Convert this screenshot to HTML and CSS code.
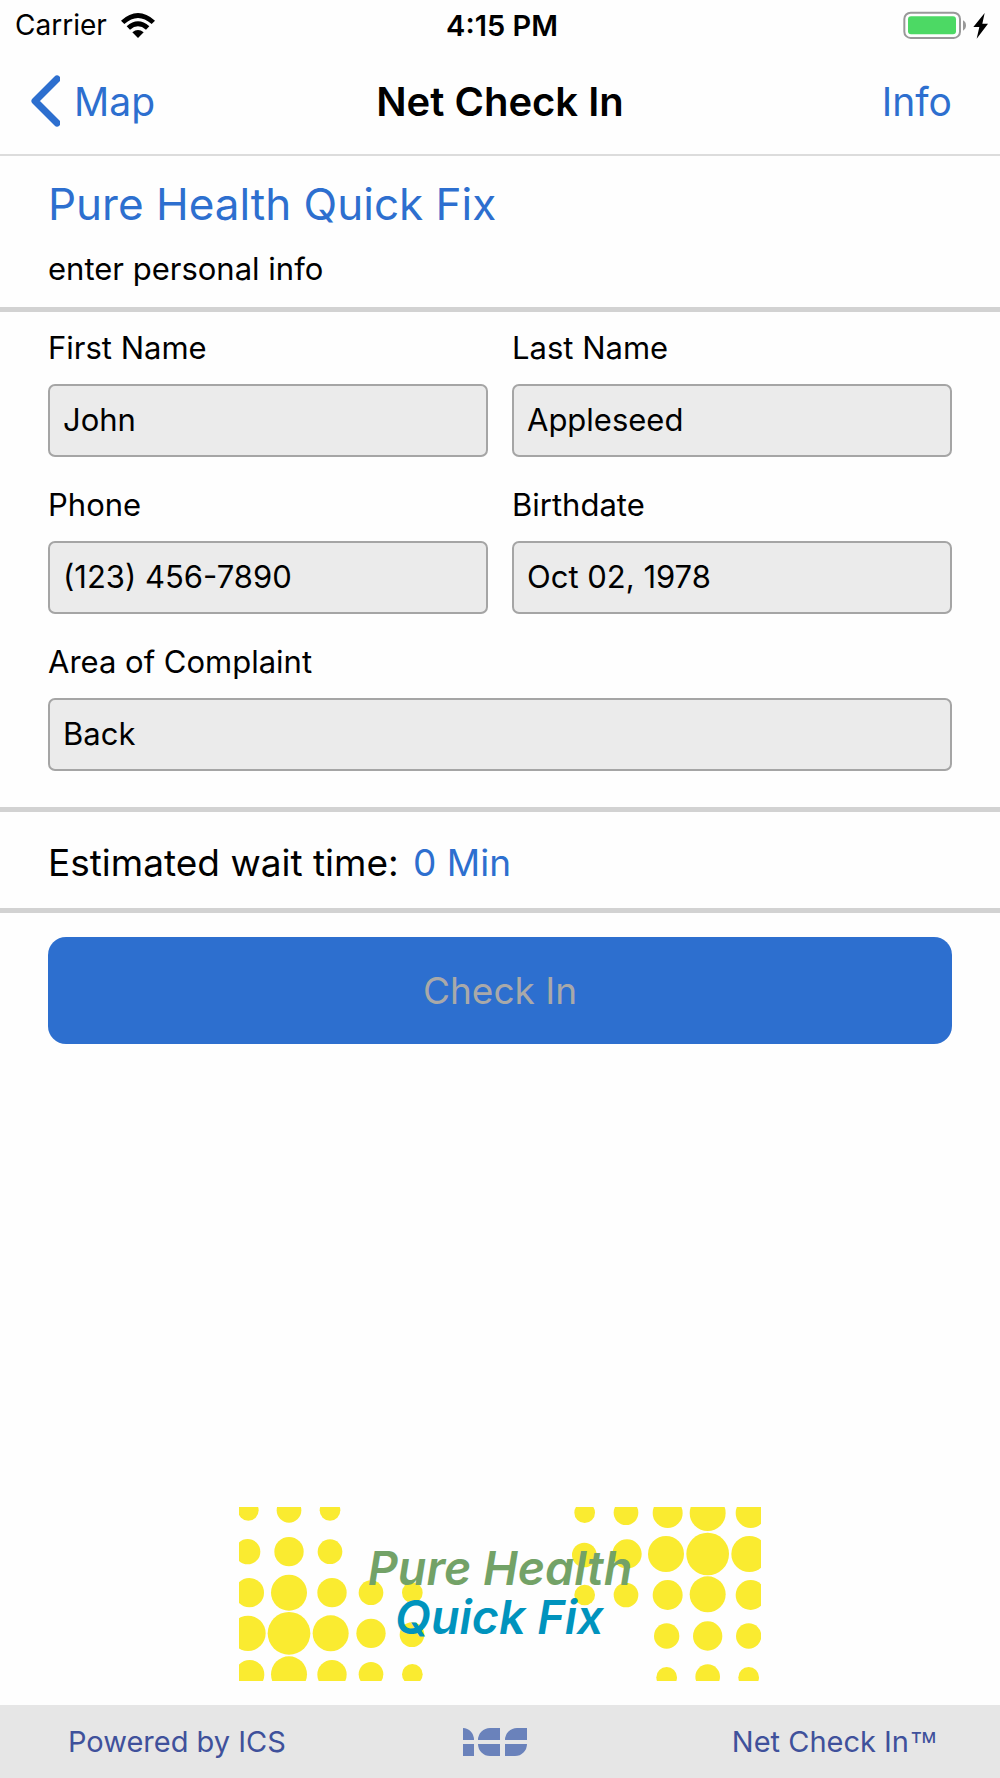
FILE: index.html
```html
<!DOCTYPE html>
<html lang="en">

<head>
    <meta charset="UTF-8">
    <meta name="viewport" content="width=device-width, initial-scale=1.0">
    <title>Net Check In</title>
    <link rel="stylesheet" href="styles.css">
</head>

<body>

    <div class="status">
        <div class="carrier">
            <span>Carrier</span>
            <svg width="34" height="25" viewBox="0 0 102 75">
                <path d="M0 23 Q51 -23 102 23 L92 33 Q51 -3 10 33 Z" />
                <path d="M17 40 Q51 10 85 40 L75 50 Q51 30 27 50 Z" />
                <path d="M34 58 Q51 44 68 58 L51 75 Z" />
            </svg>
        </div>
        <span class="time">4:15 PM</span>
        <div class="battery">
            <svg width="86" height="28" viewBox="0 0 258 84">
                <rect x="4" y="5" width="167" height="76" rx="19" fill="none" stroke="#999" stroke-width="6" />
                <rect x="15" y="16" width="144" height="54" rx="9" fill="#4cd964" />
                <path d="M180 28 Q189 33 189 43 Q189 54 180 59 Z" fill="#999" />
                <path d="M245 6 L211 48 H229 L221 83 L255 38 H238 Z" />
            </svg>
        </div>
    </div>

    <nav class="navbar">
        <a class="back" href="#map">
            <svg width="30" height="52" viewBox="0 0 30 52">
                <path d="M27 4 L5 26 L27 48" />
            </svg>
            Map
        </a>
        <h1>Net Check In</h1>
        <a class="info" href="#info">Info</a>
    </nav>

    <header class="clinic">
        <h2>Pure Health Quick Fix</h2>
        <p>enter personal info</p>
    </header>

    <form class="form" id="checkin-form">
        <div class="field">
            <label for="first_name">First Name</label>
            <input type="text" id="first_name" name="first_name" value="John">
        </div>
        <div class="field">
            <label for="last_name">Last Name</label>
            <input type="text" id="last_name" name="last_name" value="Appleseed">
        </div>
        <div class="field">
            <label for="phone">Phone</label>
            <input type="tel" id="phone" name="phone" value="(123) 456-7890">
        </div>
        <div class="field">
            <label for="birthdate">Birthdate</label>
            <input type="text" id="birthdate" name="birthdate" value="Oct 02, 1978">
        </div>
        <div class="field wide">
            <label for="complaint">Area of Complaint</label>
            <input type="text" id="complaint" name="complaint" value="Back">
        </div>
    </form>

    <p class="wait">Estimated wait time: <span>0 Min</span></p>

    <div class="submit">
        <button type="submit" form="checkin-form" disabled>Check In</button>
    </div>

    <svg class="logo" viewBox="27 36 1566 522" role="img" aria-label="Pure Health Quick Fix">
        <g class="dots">
            <!-- left -->
            <circle cx="55" cy="46" r="31" />
            <circle cx="177" cy="46" r="37" />
            <circle cx="300" cy="46" r="31" />
            <circle cx="53" cy="170" r="38" />
            <circle cx="177" cy="170" r="44" />
            <circle cx="300" cy="170" r="37" />
            <circle cx="58" cy="293" r="44" />
            <circle cx="177" cy="293" r="54" />
            <circle cx="306" cy="293" r="44" />
            <circle cx="423" cy="293" r="37" />
            <circle cx="547" cy="293" r="31" />
            <circle cx="54" cy="415" r="53" />
            <circle cx="177" cy="415" r="64" />
            <circle cx="302" cy="415" r="54" />
            <circle cx="423" cy="415" r="44" />
            <circle cx="546" cy="419" r="37" />
            <circle cx="59" cy="539" r="44" />
            <circle cx="177" cy="538" r="54" />
            <circle cx="306" cy="539" r="44" />
            <circle cx="423" cy="538" r="37" />
            <circle cx="547" cy="538" r="31" />
            <!-- right -->
            <circle cx="1064" cy="53" r="31" />
            <circle cx="1188" cy="53" r="37" />
            <circle cx="1313" cy="54" r="45" />
            <circle cx="1433" cy="54" r="54" />
            <circle cx="1562" cy="54" r="45" />
            <circle cx="1063" cy="180" r="37" />
            <circle cx="1191" cy="177" r="44" />
            <circle cx="1308" cy="177" r="54" />
            <circle cx="1433" cy="177" r="64" />
            <circle cx="1558" cy="177" r="54" />
            <circle cx="1064" cy="300" r="31" />
            <circle cx="1188" cy="300" r="37" />
            <circle cx="1313" cy="300" r="45" />
            <circle cx="1433" cy="298" r="54" />
            <circle cx="1562" cy="300" r="45" />
            <circle cx="1310" cy="423" r="38" />
            <circle cx="1433" cy="423" r="44" />
            <circle cx="1556" cy="423" r="38" />
            <circle cx="1310" cy="547" r="31" />
            <circle cx="1433" cy="545" r="37" />
            <circle cx="1556" cy="547" r="31" />
        </g>
        <text class="pure" x="810" y="270">Pure Health</text>
        <text class="quick" x="808" y="416">Quick Fix</text>
    </svg>

    <footer class="footer">
        <span>Powered by ICS</span>
        <svg width="64" height="28" viewBox="0 0 64 28">
            <path d="M0 0 A11 12 0 0 1 11 12 H0 Z M0 16 H11 V28 H0 Z" />
            <path d="M37 0 H27 A12 12 0 0 0 15 12 H37 Z M15 16 H37 V28 H27 A12 12 0 0 1 15 16 Z" />
            <path d="M64 0 H54 A12 12 0 0 0 42 12 H64 Z M42 16 H64 A12 12 0 0 1 52 28 H42 Z" />
        </svg>
        <span class="product">Net Check In<span class="tm">™</span></span>
    </footer>

</body>

</html>
```
FILE: styles.css
```css
* {
    box-sizing: border-box;
}

body {
    display: flex;
    flex-direction: column;
    min-height: 100vh;
    margin: 0;
    background-color: #fefefe;
    color: black;
    font-family: 'Inter', sans-serif;
    font-size: 31px;
}

h1,
h2,
p {
    margin: 0;
    font-weight: 400;
}

a {
    color: #2d6fcf;
    text-decoration: none;
}

.status,
.navbar,
.footer {
    display: grid;
    grid-template-columns: 1fr auto 1fr;
    align-items: center;
}

.status {
    height: 50px;
    padding: 0 11px 0 15px;
    font-size: 28px;
}

.carrier {
    display: flex;
    align-items: center;
    gap: 14px;
}

.time {
    font-size: 29px;
    font-weight: 600;
}

.battery {
    display: flex;
    justify-content: flex-end;
}

.navbar {
    height: 106px;
    padding: 0 30px 2px;
    border-bottom: 2px solid #dcdcdc;
    font-size: 39px;
}

.navbar h1 {
    font-size: 40px;
    font-weight: 600;
}

.back {
    display: flex;
    align-items: center;
    gap: 14px;
}

.back svg {
    fill: none;
    stroke: #2d6fcf;
    stroke-width: 7;
    stroke-linecap: round;
    stroke-linejoin: round;
}

.info {
    padding-right: 18px;
    text-align: right;
}

.clinic {
    padding: 18px 48px;
    border-bottom: 5px solid #d2d2d2;
}

.clinic h2 {
    color: #2d6fcf;
    font-size: 44px;
    line-height: 60px;
}

.clinic p {
    padding-top: 15px;
    line-height: 40px;
}

.form {
    display: grid;
    grid-template-columns: 1fr 1fr;
    gap: 28px 24px;
    padding: 16px 48px 36px;
    border-bottom: 5px solid #d2d2d2;
}

.field {
    display: flex;
    flex-direction: column;
    gap: 16px;
}

.wide {
    grid-column: 1 / -1;
}

label {
    line-height: 40px;
}

input {
    width: 100%;
    height: 73px;
    padding: 0 13px 2px;
    border: 2px solid #a5a5a5;
    border-radius: 7px;
    background-color: #ebebeb;
    color: black;
    font: inherit;
}

.wait {
    padding: 27px 48px 21px;
    border-bottom: 5px solid #d2d2d2;
    font-size: 37px;
    line-height: 48px;
}

.wait span {
    padding-left: 4px;
    color: #2d6fcf;
}

.submit {
    padding: 24px 48px;
}

.submit button {
    width: 100%;
    height: 107px;
    border: none;
    border-radius: 18px;
    background-color: #2d6fcf;
    color: #a9a9a9;
    font: inherit;
    font-size: 37px;
}

.logo {
    width: 522px;
    margin: auto auto 24px;
    font-size: 140px;
    font-style: italic;
    font-weight: 600;
    text-anchor: middle;
}

.dots {
    fill: #faeb30;
}

.pure {
    fill: #73a267;
}

.quick {
    fill: #0093bd;
}

.footer {
    height: 73px;
    padding: 0 62px 0 68px;
    background-color: #e6e6e6;
    color: #3f519b;
    font-size: 29px;
}

.footer svg {
    margin-right: 16px;
    fill: #6a82bb;
}

.product {
    text-align: right;
}

.tm {
    font-family: 'Liberation Sans', sans-serif;
}
```
